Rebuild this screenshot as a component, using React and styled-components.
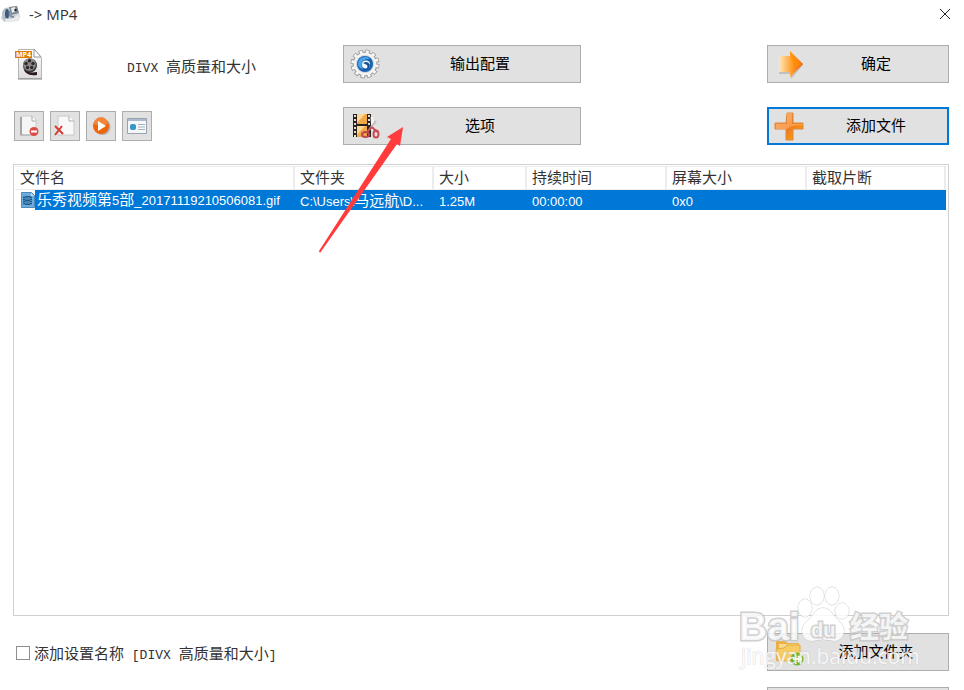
import { useState } from "react";
import styled, { createGlobalStyle } from "styled-components";

const GlobalStyle = createGlobalStyle`
  * {
    box-sizing: border-box;
  }

  body {
    margin: 0;
    background: #fff;
    color: #333;
    font-family: "Open Sans", "Noto Sans CJK SC", sans-serif;
    font-size: 15px;
  }

  button, input {
    font: inherit;
    margin: 0;
  }
`;

const Window = styled.div`
  position: relative;
  display: flex;
  flex-direction: column;
  height: 100vh;
  overflow: hidden;
`;

const TitleBar = styled.header`
  display: flex;
  align-items: center;
  gap: 9px;
  height: 28px;
  flex: none;
  padding: 0 13px 0 0;
`;

const Title = styled.h1`
  flex: 1;
  margin: 0;
  font-size: 15px;
  font-weight: 400;
  line-height: 20px;
`;

const CloseButton = styled.button`
  display: flex;
  padding: 0;
  border: none;
  background: none;
`;

const Controls = styled.section`
  display: grid;
  grid-template-columns: 329fr 238fr 186fr 182fr;
  row-gap: 24px;
  align-items: center;
  flex: none;
  padding: 17px 15px 19px 14px;
`;

const Format = styled.div`
  display: flex;
  align-items: center;
  padding-top: 2px;
`;

const FormatIcon = styled.div`
  display: flex;
  width: 113px;
`;

const Tools = styled.div`
  display: flex;
  gap: 6px;
`;

const ToolButton = styled.button`
  display: flex;
  align-items: center;
  justify-content: center;
  width: 30px;
  height: 30px;
  padding: 0;
  border: 1px solid #adadad;
  background: #e1e1e1;
`;

const BigButton = styled.button`
  display: flex;
  align-items: center;
  width: 100%;
  height: 38px;
  padding: 0 2px 0 0;
  border: ${(p) => (p.$active ? "2px solid #0078d7" : "1px solid #adadad")};
  background: #e1e1e1;
  color: #000;
  grid-column: ${(p) => p.$column || "auto"};

  svg {
    flex: none;
    margin-left: 4px;
  }

  span {
    flex: 1;
    padding-bottom: 2px;
    text-align: center;
    line-height: 20px;
  }
`;

const ListBox = styled.main`
  flex: 1;
  min-height: 0;
  margin: 0 15px 0 13px;
  padding: 1px 2px 1px 1px;
  border: 1px solid #d0d0d0;
`;

const Table = styled.table`
  width: 100%;
  table-layout: fixed;
  border-collapse: separate;
  border-spacing: 0;
`;

const HeadCell = styled.th`
  width: ${(p) => (p.$width ? `${p.$width}px` : "auto")};
  height: 24px;
  padding: 0 0 2px 5px;
  border-top: 1px solid #ececec;
  border-right: 2px solid #ececec;
  border-bottom: 1px solid #ececec;
  font-weight: 400;
  line-height: 20px;
  text-align: left;
`;

const Cell = styled.td`
  height: 20px;
  padding: 0 0 0 ${(p) => (p.$first ? 0 : 5)}px;
  background: ${(p) => (p.$first ? "#fff" : "#0078d7")};
  color: #fff;
  line-height: 18px;
  white-space: nowrap;
  overflow: hidden;
`;

const FileName = styled.div`
  display: flex;
  align-items: center;
  height: 20px;
  padding-left: 6px;

  svg {
    flex: none;
  }
`;

const Selected = styled.span`
  flex: 1;
  height: 20px;
  padding-left: 2px;
  background: #0078d7;
`;

const Latin = styled.span`
  font-family: ${(p) => (p.$mono ? '"Liberation Mono", monospace' : '"Liberation Sans", sans-serif')};
  font-size: 13px;
  line-height: 1;
  white-space: pre;
`;

const Footer = styled.footer`
  display: flex;
  justify-content: space-between;
  align-items: flex-start;
  flex: none;
  height: 74px;
  overflow: hidden;
  padding: 17px 15px 0 16px;
`;

const CheckLabel = styled.label`
  display: flex;
  align-items: center;
  gap: 4px;
  height: 40px;
  line-height: 20px;
`;

const Checkbox = styled.input`
  appearance: none;
  width: 14px;
  height: 14px;
  border: 1px solid #8f8f8f;
  background: #fff;

  &:checked {
    background: #0078d7;
  }
`;

const FooterButtons = styled.div`
  display: flex;
  flex-direction: column;
  gap: 16px;
  width: 19.5%;
`;

const Pointer = styled.svg`
  position: absolute;
  left: 316px;
  top: 124px;
  pointer-events: none;
`;

const Watermark = styled.svg`
  position: absolute;
  right: 38px;
  bottom: 14px;
  pointer-events: none;
`;

// latin runs use their own face and a smaller size than the Chinese text
function Mixed({ text, mono }) {
  return (
    <span>
      {text.split(/([\x20-\x7e]+)/).map((part, i) =>
        i % 2 ? (
          <Latin key={i} $mono={mono}>
            {part}
          </Latin>
        ) : (
          part
        )
      )}
    </span>
  );
}

const AppIcon = () => (
  <svg width="20" height="18" viewBox="0 0 20 18">
    <path d="M5 3 17 1l3 11-2 4-14 1-3-4z" fill="#c9ced2" />
    <path d="m9 2 8-1 2 7-8 2z" fill="#7f8992" />
    <path d="m11 3 4-1 1 4-4 2z" fill="#e9edf0" />
    <ellipse cx="6" cy="9" rx="4" ry="6" fill="#b4c2cf" />
    <ellipse cx="7" cy="9" rx="2" ry="5" fill="#41597a" />
    <path d="M6 13q6 3 12-4l2 5-3 2-12 1z" fill="#e8ebed" />
    <path d="M10 6c-1 4 0 6 4 6" fill="none" stroke="#7891a8" strokeWidth="2" />
    <circle cx="15.500" cy="5" r="1.200" fill="#17232e" />
  </svg>
);

const CloseIcon = () => (
  <svg width="12" height="12" viewBox="0 0 12 12">
    <path d="m1 1 10 10M11 1 1 11" stroke="#222" fill="none" />
  </svg>
);

const Mp4Icon = () => (
  <svg width="30" height="34" viewBox="0 0 30 34">
    <defs>
      <linearGradient id="paper" x1="0" y1="0" x2="0" y2="1">
        <stop offset="0" stopColor="#fff" />
        <stop offset="1" stopColor="#dcdcdc" />
      </linearGradient>
    </defs>
    <path d="M4.500 1.500h16l7 8v21h-23z" fill="url(#paper)" stroke="#b5b5b5" />
    <path d="M4 31h24" stroke="#888" />
    <path d="M20 1v8h7z" fill="#fff" stroke="#999" />
    <circle cx="16" cy="17.500" r="7" fill="#3b3937" />
    <circle cx="15.500" cy="16.500" r="6.300" fill="#8d8b89" />
    <g fill="#2d2a29">
      <circle cx="12" cy="15.500" r="1.700" />
      <circle cx="15.500" cy="12.800" r="1.700" />
      <circle cx="19" cy="15.500" r="1.700" />
      <circle cx="13.500" cy="19.500" r="1.700" />
      <circle cx="17.700" cy="19.500" r="1.700" />
    </g>
    <path d="M9 19q2 7 14 5v3Q11 29 9 19" fill="#2a1a1c" />
    <path d="M1 3h17v7H1z" fill="#df7d07" />
    <text x="2" y="9" fontSize="7" fontWeight="700" fill="#fff" fontFamily="Open Sans">
      MP4
    </text>
  </svg>
);

const RemoveIcon = () => (
  <svg width="22" height="24" viewBox="0 0 22 24">
    <path d="M3 2h11l4 4v15H3z" fill="#f5f5f5" stroke="#ccc" />
    <path d="M2 3h2v18H2z" fill="#a5a5a5" />
    <path d="M2 21h15" stroke="#aaa" />
    <path d="M14 2v5h4" fill="#fff" stroke="#aaa" />
    <circle cx="16" cy="17.500" r="4.500" fill="#db4e48" />
    <path d="M13 17.500h6" stroke="#fff" strokeWidth="2" />
  </svg>
);

const ClearIcon = () => (
  <svg width="24" height="24" viewBox="0 0 24 24">
    <path d="M5 2h11l5 5v14H5z" fill="#f8f8f8" stroke="#c8c8c8" />
    <path d="M16 2v5h5" fill="#fff" stroke="#aaa" />
    <path d="m2 12 8 8M9 12l-7 9" fill="none" stroke="#dd3930" strokeWidth="2" />
  </svg>
);

const PlayIcon = () => (
  <svg width="22" height="22" viewBox="0 0 22 22">
    <circle cx="12.500" cy="12" r="8" fill="#b0b0b0" />
    <circle cx="11" cy="11" r="8" fill="#ed6507" />
    <path d="M4 9a7 7 0 0 1 14 0q-7 3-14 0" fill="#f4853a" />
    <path d="m8 6 8 5-8 5z" fill="#fff" />
  </svg>
);

const InfoIcon = () => (
  <svg width="22" height="20" viewBox="0 0 22 20">
    <path d="M1.500 2.500h19v15h-19z" fill="#f5f7f9" stroke="#98a3ad" />
    <path d="M2 3h18v2H2z" fill="#a9bbcc" />
    <rect x="4" y="8" width="6" height="6" rx="2" fill="#3597cb" />
    <path d="M12 8.500h7M12 11h7M12 13.500h7" stroke="#a5b3c3" />
  </svg>
);

const GearIcon = () => (
  <svg width="34" height="34" viewBox="0 0 34 34">
    <circle cx="17" cy="17" r="12" fill="#aaa" stroke="#999" />
    <circle cx="17" cy="17" r="12" fill="none" stroke="#999" strokeWidth="5" strokeDasharray="4.100 2.183" />
    <circle cx="17" cy="17" r="12" fill="none" stroke="#f8f8f8" strokeWidth="3.400" strokeDasharray="2.700 3.583" strokeDashoffset="-.7" />
    <circle cx="17" cy="17" r="11.300" fill="#f3f3f3" />
    <circle cx="17" cy="17" r="9" fill="#cbd3dd" />
    <circle cx="17" cy="17" r="8" fill="#1763b4" />
    <path d="M10 17a7 7 0 0 1 12-5c-8-1-10 5-7 10q-5-1-5-5" fill="#4ba5e4" />
    <circle cx="18" cy="17.500" r="4" fill="#eff9ff" />
    <path d="M15 16q5-3 7 2-1 6-7 5 6-1 4-5z" fill="#174c91" />
  </svg>
);

const FilmIcon = () => (
  <svg width="34" height="34" viewBox="0 0 34 34">
    <path d="M5 5h18v23H5z" fill="#282320" />
    <path d="M9 5h10v10H9zm0 12h10v11H9z" fill="#f3a848" />
    <path d="M9 5h8l-8 9zm0 12h8l-8 9z" fill="#ffd795" />
    <path d="M7 6v22M21 6v12" stroke="#e8ddd0" strokeWidth="2" strokeDasharray="2 2" />
    <path d="m24 8 1 13" stroke="#f3f3f3" strokeWidth="3" />
    <path d="m28 12-8 10" stroke="#bbb" strokeWidth="2" />
    <path d="m24 18-5 5m5-5 5 5" stroke="#c94c50" strokeWidth="2" />
    <ellipse cx="17.500" cy="25.500" rx="3.500" ry="2.500" fill="none" stroke="#b94b4b" strokeWidth="2" />
    <ellipse cx="28" cy="25" rx="2.500" ry="3.500" fill="none" stroke="#c94c50" strokeWidth="2" />
  </svg>
);

const ArrowIcon = () => (
  <svg width="34" height="34" viewBox="0 0 34 34">
    <defs>
      <linearGradient id="orange">
        <stop offset="0" stopColor="#ffe6b9" />
        <stop offset="0.550" stopColor="#ff9c27" />
        <stop offset="1" stopColor="#ed4d0d" />
      </linearGradient>
    </defs>
    <path d="M7 11h11V6l13 12-12 14v-5H7z" fill="#aaa" opacity=".6" />
    <path d="M7 9h11V4l13 13-13 13v-5H7z" fill="url(#orange)" />
    <path d="m18 4 12 13-5 4q-7-7-7-17" fill="#ff9000" opacity=".7" />
  </svg>
);

const PlusIcon = () => (
  <svg width="34" height="34" viewBox="0 0 34 34">
    <defs>
      <linearGradient id="plus" x1="0" y1="0" x2="1" y2="1">
        <stop offset="0" stopColor="#f5b06c" />
        <stop offset="0.500" stopColor="#ee7720" />
        <stop offset="1" stopColor="#ffb000" />
      </linearGradient>
    </defs>
    <path d="M14 4h6v10h10v6H20v11h-7V20H2v-6h11z" fill="url(#plus)" stroke="#d9883e" />
    <path d="M14 4h5v11h11v1q-12 0-16 4H3v-5h11z" fill="#ffb66f" opacity=".6" />
  </svg>
);

const FolderIcon = () => (
  <svg width="34" height="34" viewBox="0 0 34 34">
    <path d="M4 6h9l3 2h11v18H4z" fill="#e9b04a" />
    <path d="M7 9h19v15H7z" fill="#f8dc8c" />
    <path d="m4 14 8-1 3-3h13v16H6z" fill="#f6cb64" stroke="#e0ad45" />
    <circle cx="25" cy="24" r="6.500" fill="#65b426" />
    <path d="M21 24h8m-3-3 3 3-3 3" fill="none" stroke="#fff" strokeWidth="2" />
  </svg>
);

const FileIcon = () => (
  <svg width="14" height="16" viewBox="0 0 14 16">
    <path d="M.5.5h10l3 3v12H.5z" fill="#6caddb" stroke="#4b8abb" />
    <path d="M10 1v3h3" fill="#c7e5f7" />
    <path d="M2 4h9v9H2z" fill="#1f5686" />
    <path d="M4 5h5v3H4zm0 4h5v3H4z" fill="#3f84b9" />
    <path d="M3 4v9M10 4v9" stroke="#8fc0e2" strokeDasharray="1 1" />
  </svg>
);

const columns = [
  { name: "文件名", width: 280 },
  { name: "文件夹", width: 139 },
  { name: "大小", width: 93 },
  { name: "持续时间", width: 140 },
  { name: "屏幕大小", width: 140 },
  { name: "截取片断" },
];

const files = [
  {
    name: "乐秀视频第5部_20171119210506081.gif",
    info: ["C:\\Users\\马远航\\D...", "1.25M", "00:00:00", "0x0", ""],
  },
];

const tools = [
  { label: "移除", Icon: RemoveIcon },
  { label: "清空列表", Icon: ClearIcon },
  { label: "播放", Icon: PlayIcon },
  { label: "文件信息", Icon: InfoIcon },
];

function App() {
  const [addName, setAddName] = useState(false);

  return (
    <Window>
      <GlobalStyle />
      <TitleBar>
        <AppIcon />
        <Title>-&gt; MP4</Title>
        <CloseButton aria-label="关闭">
          <CloseIcon />
        </CloseButton>
      </TitleBar>

      <Controls>
        <Format>
          <FormatIcon>
            <Mp4Icon />
          </FormatIcon>
          <Mixed mono text="DIVX 高质量和大小" />
        </Format>
        <BigButton>
          <GearIcon />
          <span>输出配置</span>
        </BigButton>
        <BigButton $column="4">
          <ArrowIcon />
          <span>确定</span>
        </BigButton>
        <Tools>
          {tools.map(({ label, Icon }) => (
            <ToolButton key={label} aria-label={label}>
              <Icon />
            </ToolButton>
          ))}
        </Tools>
        <BigButton>
          <FilmIcon />
          <span>选项</span>
        </BigButton>
        <BigButton $column="4" $active>
          <PlusIcon />
          <span>添加文件</span>
        </BigButton>
      </Controls>

      <ListBox>
        <Table>
          <thead>
            <tr>
              {columns.map((col) => (
                <HeadCell key={col.name} $width={col.width}>
                  {col.name}
                </HeadCell>
              ))}
            </tr>
          </thead>
          <tbody>
            {files.map((file) => (
              <tr key={file.name}>
                <Cell $first>
                  <FileName>
                    <FileIcon />
                    <Selected>
                      <Mixed text={file.name} />
                    </Selected>
                  </FileName>
                </Cell>
                {file.info.map((value, i) => (
                  <Cell key={i}>
                    <Mixed text={value} />
                  </Cell>
                ))}
              </tr>
            ))}
          </tbody>
        </Table>
      </ListBox>

      <Footer>
        <CheckLabel>
          <Checkbox
            type="checkbox"
            checked={addName}
            onChange={(e) => setAddName(e.target.checked)}
          />
          <Mixed mono text="添加设置名称 [DIVX 高质量和大小]" />
        </CheckLabel>
        <FooterButtons>
          <BigButton>
            <FolderIcon />
            <span>添加文件夹</span>
          </BigButton>
          <BigButton aria-label="更多" />
        </FooterButtons>
      </Footer>

      <Pointer width="90" height="132" viewBox="0 0 90 132">
        <path d="M87 3 71 13l4 2L3 127l1 2 77-109 3 2z" fill="#ff3b3b" />
      </Pointer>

      <Watermark width="200" height="92" viewBox="0 0 200 92">
        <g fill="#fff" fillOpacity=".8" stroke="#c4c4c4" strokeOpacity=".8" paintOrder="stroke">
          <ellipse cx="79" cy="24" rx="7" ry="9" />
          <ellipse cx="91" cy="12" rx="7" ry="9" />
          <ellipse cx="106" cy="12" rx="7" ry="9" />
          <ellipse cx="116" cy="27" rx="7" ry="8" />
          <path d="M97 24c-8 0-9 7-15 12-10 8-6 21 4 21q11-3 22 0c10 0 14-13 5-20-7-6-8-13-16-13" />
          <g fontFamily="Liberation Sans" fontWeight="700" strokeWidth="3">
            <text x="13" y="56" fontSize="39">
              Bai
            </text>
            <text x="85" y="53" fontSize="20">
              du
            </text>
            <text x="124" y="54" fontSize="29" fontFamily="Noto Sans CJK SC">
              经验
            </text>
          </g>
          <text x="15" y="80" fontSize="21" fontFamily="Open Sans" strokeOpacity=".5">
            jingyan.baidu.com
          </text>
        </g>
      </Watermark>
    </Window>
  );
}

export default App;
